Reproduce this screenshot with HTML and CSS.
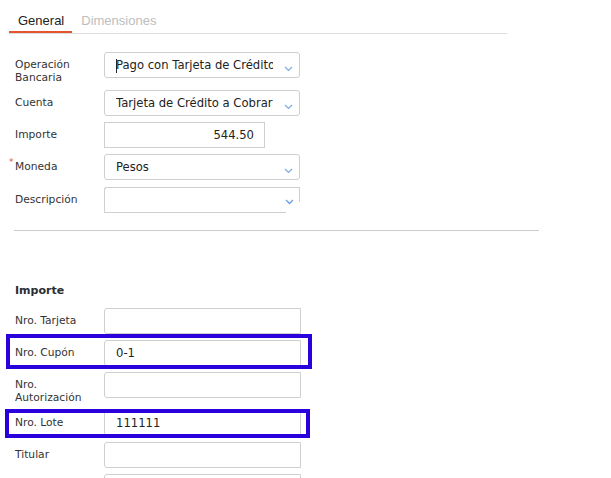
FILE: index.html
```html
<!DOCTYPE html>
<html lang="es">
<head>
<meta charset="utf-8">
<link rel="stylesheet" href="styles.css">
</head>
<body>
<div class="tabs">
  <div class="tab active">General</div>
  <div class="tab">Dimensiones</div>
</div>

<div class="form">
  <div class="row">
    <label class="label">Operación<br>Bancaria</label>
    <div class="select"><span class="caret"></span><span class="value">Pago con Tarjeta de Crédito</span><svg class="chev" width="9" height="6" viewBox="0 0 9 6"><polyline points="1,1 4.5,4.5 8,1" fill="none" stroke="#7fa9e6" stroke-width="1.2"/></svg></div>
  </div>
  <div class="row">
    <label class="label">Cuenta</label>
    <div class="select"><span class="value">Tarjeta de Crédito a Cobrar</span><svg class="chev" width="9" height="6" viewBox="0 0 9 6"><polyline points="1,1 4.5,4.5 8,1" fill="none" stroke="#7fa9e6" stroke-width="1.2"/></svg></div>
  </div>
  <div class="row">
    <label class="label">Importe</label>
    <div class="input number">544.50</div>
  </div>
  <div class="row row-moneda">
    <label class="label required">Moneda</label>
    <div class="select"><span class="value">Pesos</span><svg class="chev" width="9" height="6" viewBox="0 0 9 6"><polyline points="1,1 4.5,4.5 8,1" fill="none" stroke="#7fa9e6" stroke-width="1.2"/></svg></div>
  </div>
  <div class="row">
    <label class="label">Descripción</label>
    <div class="select broken"><span class="value"></span><svg class="chev" width="9" height="6" viewBox="0 0 9 6"><polyline points="1,1 4.5,4.5 8,1" fill="none" stroke="#6d9de6" stroke-width="1.3"/></svg></div>
  </div>

  <hr class="sep">

  <h3 class="section">Importe</h3>

  <div class="row">
    <label class="label">Nro. Tarjeta</label>
    <div class="input text"></div>
  </div>
  <div class="row marked">
    <label class="label">Nro. Cupón</label>
    <div class="input text">0-1</div>
    <span class="mark mark-cupon"></span>
  </div>
  <div class="row">
    <label class="label">Nro.<br>Autorización</label>
    <div class="input text"></div>
  </div>
  <div class="row marked">
    <label class="label">Nro. Lote</label>
    <div class="input text">111111</div>
    <span class="mark mark-lote"></span>
  </div>
  <div class="row">
    <label class="label">Titular</label>
    <div class="input text"></div>
  </div>
  <div class="row">
    <label class="label"></label>
    <div class="input text"></div>
  </div>
</div>
</body>
</html>
```
FILE: styles.css
```css
html, body {
  margin: 0;
  padding: 0;
  background: #ffffff;
}
body {
  font-family: "DejaVu Sans", sans-serif;
  color: #333;
  width: 611px;
  height: 478px;
  overflow: hidden;
}

.tabs {
  display: flex;
  margin-left: 9px;
  width: 498px;
  border-bottom: 1px solid #dcdcdc;
}
.tab {
  font-family: "Liberation Sans", Arial, sans-serif;
  font-size: 13px;
  line-height: 15px;
  padding: 13px 8px 3px 9px;
  color: #bdbdbd;
  border-bottom: 2px solid transparent;
}
.tab.active {
  color: #222;
  border-bottom-color: #e5532f;
}

.form {
  padding-top: 18px;
  display: flex;
  flex-direction: column;
  gap: 6px;
}

.row {
  display: flex;
  align-items: flex-start;
  padding-left: 15px;
  position: relative;
}
.row-moneda {
  margin-bottom: 1px;
}

.label {
  width: 89px;
  flex: none;
  font-size: 10.7px;
  line-height: 13px;
  padding-top: 6px;
  color: #333;
  position: relative;
}
.label.required::before {
  content: "*";
  position: absolute;
  left: -6px;
  top: 2px;
  color: #e0533c;
  font-size: 9px;
}

.select, .input {
  box-sizing: border-box;
  height: 26px;
  border: 1px solid #cfcfcf;
  font-size: 11.6px;
  color: #222;
  display: flex;
  align-items: center;
  position: relative;
}
.select {
  width: 196px;
  border-radius: 3px;
  padding: 0 26px 0 11px;
}
.select .value {
  white-space: nowrap;
  overflow: hidden;
  flex: 1;
}
.select .caret {
  position: absolute;
  left: 11px;
  top: 6px;
  width: 1px;
  height: 14px;
  background: #222;
}
.chev {
  position: absolute;
  right: 6px;
  top: 13px;
}

.select.broken {
  border-right: none;
  border-bottom: none;
  border-radius: 3px 0 0 3px;
}
.select.broken::before {
  content: "";
  position: absolute;
  left: -1px;
  bottom: 0;
  width: 182px;
  height: 1px;
  background: #cfcfcf;
}
.select.broken::after {
  content: "";
  position: absolute;
  right: 0;
  top: -1px;
  width: 1px;
  height: 15px;
  background: #cfcfcf;
}
.select.broken .chev {
  top: 11px;
  right: 6px;
}

.input.number {
  width: 161px;
  justify-content: flex-end;
  padding-right: 10px;
  border-radius: 0;
}
.input.text {
  width: 197px;
  padding-left: 11px;
  border-radius: 3px 0 0 3px;
}

.sep {
  border: none;
  height: 1px;
  background: #cccccc;
  margin: 11px 0 0 14px;
  width: 525px;
}

.section {
  margin: 47px 0 5px 15px;
  font-size: 11px;
  line-height: 13px;
  font-weight: bold;
  color: #2a2d33;
}

.mark {
  position: absolute;
  box-sizing: border-box;
  border: 4px solid #2a00dc;
  pointer-events: none;
}
.mark-cupon {
  left: 6px;
  top: -6px;
  width: 306px;
  height: 35px;
}
.mark-lote {
  left: 5px;
  top: -1px;
  width: 305px;
  height: 29px;
}
```
